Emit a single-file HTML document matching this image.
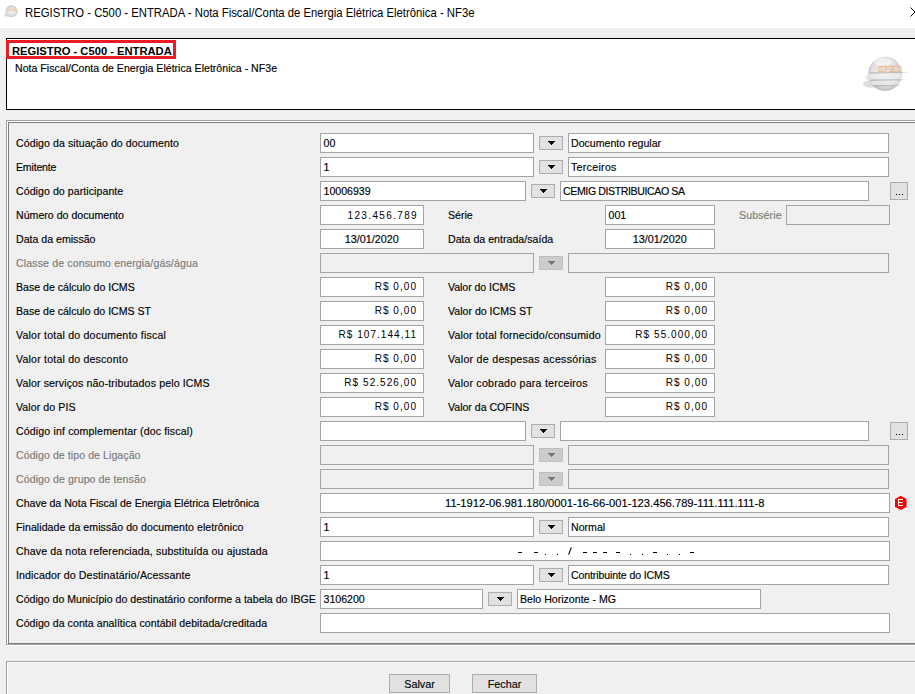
<!DOCTYPE html>
<html><head><meta charset="utf-8"><style>
*{box-sizing:border-box;margin:0;padding:0}
html,body{width:915px;height:694px;overflow:hidden;background:#f0f0f0;font-family:"Liberation Sans",sans-serif;color:#000;-webkit-text-stroke:0.15px currentColor}
.abs{position:absolute}
#title{position:absolute;left:0;top:0;width:915px;height:28px;background:#fff}
#title .t{position:absolute;left:25px;top:6px;font-size:12.3px;transform:scaleX(0.92);transform-origin:0 0;-webkit-text-stroke:0;line-height:14px;white-space:nowrap;color:#000}
#hdr{position:absolute;left:6px;top:38px;width:920px;height:72px;background:#fff;border:1px solid #000}
#red{position:absolute;left:6px;top:40px;width:170px;height:19px;border:3px solid #ed1c24}
#hb{position:absolute;left:12px;top:44px;-webkit-text-stroke:0;font-size:11.2px;font-weight:bold;line-height:14px;white-space:nowrap}
#hs{position:absolute;left:15px;top:62px;font-size:10.6px;line-height:12px;white-space:nowrap}
#grp{position:absolute;left:6px;top:120px;width:930px;height:525px;border:1px solid #a0a0a0;border-right:none}
#grpw{position:absolute;left:6px;top:645px;width:930px;height:1px;background:#fff}
#grp2{position:absolute;left:7px;top:121px;width:930px;height:523px;border-top:1px solid #fff;border-left:1px solid #fff}
#grp3{position:absolute;left:8px;top:122px;width:930px;height:522px;border-top:1px solid #7a808a;border-left:1px solid #7a808a;border-bottom:1px solid #7a808a}
#bot{position:absolute;left:6px;top:661px;width:930px;height:60px;border-top:1px solid #a0a0a0;border-left:1px solid #a0a0a0}
#bot2{position:absolute;left:7px;top:662px;width:930px;height:60px;border-top:1px solid #fff;border-left:1px solid #fff}
.lbl{position:absolute;font-size:10.6px;line-height:19px;height:19px;white-space:nowrap;padding-top:1px}
.dis{color:#7a7a7a}
.tb{position:absolute;height:20px;background:#fff;border:1px solid #a3a4aa;font-size:10.6px;line-height:17px;padding:1px 3px 0 2.5px;white-space:nowrap;overflow:hidden}
.dtb{background:#f0f0f0}
.desc{padding-left:2px}
.money{-webkit-text-stroke:0;font-size:10px;letter-spacing:1.05px;padding-right:6px;padding-top:0;line-height:17px}
.num{-webkit-text-stroke:0;font-size:10px;letter-spacing:1.35px;padding-right:5px}
.chave{font-size:11.2px}
.date{font-size:10.8px}
.dd{position:absolute;width:24px;height:14px;background:#e1e1e1;border:1px solid #adadad}
.dd svg{position:absolute;left:8px;top:4px;fill:#000}
.ddd{background:#cccccc;border-color:#bfbfbf}
.ddd svg{fill:#767676}
.ell{position:absolute;width:18px;height:18px;background:#e1e1e1;border:1px solid #adadad}
.ell b{position:absolute;top:11px;width:1px;height:1px;background:#000}
.ell b:nth-child(1){left:5px} .ell b:nth-child(2){left:8px} .ell b:nth-child(3){left:11px}
.eicon{position:absolute}
.btn{position:absolute;top:674px;height:19px;background:#e1e1e1;border:1px solid #adadad;font-size:10.75px;line-height:17px;padding-top:1px;text-align:center}
</style></head><body>
<div id="title">
<svg style="position:absolute;left:3px;top:5px" width="16" height="13" viewBox="0 0 16 13">
<defs><radialGradient id="ig" cx="0.5" cy="0.5" r="0.5"><stop offset="0" stop-color="#ececec"/><stop offset="0.8" stop-color="#dadada"/><stop offset="1" stop-color="#c4c4c4"/></radialGradient></defs>
<ellipse cx="4.5" cy="10" rx="3.5" ry="1.8" fill="#e0e0e0"/>
<circle cx="8.5" cy="6.3" r="6" fill="url(#ig)"/>
<rect x="5.8" y="3.6" width="8.2" height="2.2" fill="#f0cf9f"/>
<rect x="7.5" y="4" width="1.5" height="1.5" fill="#f4f4f4"/>
<rect x="4" y="7.4" width="9" height="1" fill="#f2f2f2"/>
</svg>
<div class="t">REGISTRO - C500 - ENTRADA - Nota Fiscal/Conta de Energia Elétrica Eletrônica - NF3e</div>
<svg style="position:absolute;left:910px;top:7px" width="10" height="10" viewBox="0 0 10 10"><path d="M0.5 0.5 L9.5 9.5 M0.5 9.5 L9.5 0.5" stroke="#000" stroke-width="1"/></svg>
</div>
<div id="hdr"></div>
<div id="red"></div>
<div id="hb">REGISTRO - C500 - ENTRADA</div>
<div id="hs">Nota Fiscal/Conta de Energia Elétrica Eletrônica - NF3e</div>
<svg style="position:absolute;left:858px;top:52px" width="57" height="42" viewBox="0 0 57 42">
<defs><radialGradient id="gl" cx="0.5" cy="0.45" r="0.55"><stop offset="0" stop-color="#f2f2f2"/><stop offset="0.7" stop-color="#e0e0e0"/><stop offset="0.92" stop-color="#c8c8c8"/><stop offset="1" stop-color="#b4b4b4"/></radialGradient>
<linearGradient id="wl" x1="0" x2="1"><stop offset="0" stop-color="#a8a8a8" stop-opacity="0.9"/><stop offset="0.75" stop-color="#b8b8b8" stop-opacity="0.8"/><stop offset="1" stop-color="#d0d0d0" stop-opacity="0"/></linearGradient><clipPath id="cp"><circle cx="27" cy="21.7" r="16.5"/></clipPath></defs>
<ellipse cx="13.5" cy="32" rx="8.5" ry="3.8" fill="#dedede"/>
<circle cx="27" cy="21.7" r="17" fill="url(#gl)"/>
<ellipse cx="25" cy="10" rx="9" ry="4.5" fill="#f8f8f8" opacity="0.6"/>
<g clip-path="url(#cp)"><rect x="8" y="21.5" width="40" height="5.5" fill="#f0f0f0" opacity="0.7"/><rect x="8" y="29" width="40" height="4" fill="#ebebeb" opacity="0.7"/></g>
<path d="M12 21 L52 20.4" stroke="url(#wl)" stroke-width="1"/>
<path d="M13 28.2 L49 27.6" stroke="url(#wl)" stroke-width="1"/>
<path d="M16 33.8 L45 33.2" stroke="url(#wl)" stroke-width="1"/>
<ellipse cx="11" cy="25.5" rx="3.5" ry="2.5" fill="#e2e2e2" opacity="0.8"/>
<text x="20.3" y="19.5" font-family="Liberation Serif" font-weight="bold" font-size="9.2" textLength="23.5" fill="#f2f2f2" stroke="#e8ad72" stroke-width="0.5" style="-webkit-text-stroke:0">SPED</text>
</svg>
<div id="grp"></div><div id="grpw"></div><div id="grp2"></div><div id="grp3"></div>
<div class="lbl" style="left:16px;top:133px;letter-spacing:0.067px">Código da situação do documento</div>
<div class="lbl" style="left:16px;top:157px;letter-spacing:-0.2px">Emitente</div>
<div class="lbl" style="left:16px;top:181px;letter-spacing:0.058px">Código do participante</div>
<div class="lbl" style="left:16px;top:205px;letter-spacing:0.011px">Número do documento</div>
<div class="lbl" style="left:16px;top:229px">Data da emissão</div>
<div class="lbl dis" style="left:16px;top:253px;letter-spacing:0.121px">Classe de consumo energia/gás/água</div>
<div class="lbl" style="left:16px;top:277px;letter-spacing:-0.009px">Base de cálculo do ICMS</div>
<div class="lbl" style="left:16px;top:301px;letter-spacing:-0.016px">Base de cálculo do ICMS ST</div>
<div class="lbl" style="left:16px;top:325px;letter-spacing:0.193px">Valor total do documento fiscal</div>
<div class="lbl" style="left:16px;top:349px;letter-spacing:0.191px">Valor total do desconto</div>
<div class="lbl" style="left:16px;top:373px;letter-spacing:0.126px">Valor serviços não-tributados pelo ICMS</div>
<div class="lbl" style="left:16px;top:397px;letter-spacing:0.073px">Valor do PIS</div>
<div class="lbl" style="left:16px;top:421px;letter-spacing:0.137px">Código inf complementar (doc fiscal)</div>
<div class="lbl dis" style="left:16px;top:445px;letter-spacing:0.058px">Código de tipo de Ligação</div>
<div class="lbl dis" style="left:16px;top:469px;letter-spacing:0.083px">Código de grupo de tensão</div>
<div class="lbl" style="left:16px;top:493px;letter-spacing:-0.012px">Chave da Nota Fiscal de Energia Elétrica Eletrônica</div>
<div class="lbl" style="left:16px;top:517px;letter-spacing:0.055px">Finalidade da emissão do documento eletrônico</div>
<div class="lbl" style="left:16px;top:541px;letter-spacing:0.12px">Chave da nota referenciada, substituída ou ajustada</div>
<div class="lbl" style="left:16px;top:565px;letter-spacing:0.123px">Indicador do Destinatário/Acessante</div>
<div class="lbl" style="left:16px;top:589px">Código do Município do destinatário conforme a tabela do IBGE</div>
<div class="lbl" style="left:16px;top:613px;letter-spacing:0.038px">Código da conta analítica contábil debitada/creditada</div>
<div class="tb" style="left:320px;top:133px;width:214px;text-align:left;">00</div>
<div class="dd" style="left:539px;top:136px"><svg width="7" height="4" shape-rendering="crispEdges"><path d="M0 0h7v1h-1v1h-1v1h-1v1h-1v-1h-1v-1h-1v-1h-1z"/></svg></div>
<div class="tb desc" style="left:568px;top:133px;width:321px;text-align:left;">Documento regular</div>
<div class="tb" style="left:320px;top:157px;width:214px;text-align:left;">1</div>
<div class="dd" style="left:539px;top:160px"><svg width="7" height="4" shape-rendering="crispEdges"><path d="M0 0h7v1h-1v1h-1v1h-1v1h-1v-1h-1v-1h-1v-1h-1z"/></svg></div>
<div class="tb desc" style="left:568px;top:157px;width:321px;text-align:left;letter-spacing:0.3px;">Terceiros</div>
<div class="tb" style="left:320px;top:181px;width:206px;text-align:left;">10006939</div>
<div class="dd" style="left:531px;top:184px"><svg width="7" height="4" shape-rendering="crispEdges"><path d="M0 0h7v1h-1v1h-1v1h-1v1h-1v-1h-1v-1h-1v-1h-1z"/></svg></div>
<div class="tb desc" style="left:560px;top:181px;width:309px;text-align:left;letter-spacing:-0.4px;">CEMIG DISTRIBUICAO SA</div>
<div class="ell" style="left:890px;top:182px"><b></b><b></b><b></b></div>
<div class="tb num" style="left:320px;top:205px;width:104px;text-align:right;">123.456.789</div>
<div class="lbl" style="left:448px;top:205px">Série</div>
<div class="tb" style="left:605px;top:205px;width:110px;text-align:left;">001</div>
<div class="lbl dis" style="left:739px;top:205px;letter-spacing:0.114px">Subsérie</div>
<div class="tb dtb" style="left:786px;top:205px;width:104px;text-align:left;"></div>
<div class="tb date" style="left:320px;top:229px;width:104px;text-align:center;">13/01/2020</div>
<div class="lbl" style="left:448px;top:229px;letter-spacing:0.02px">Data da entrada/saída</div>
<div class="tb date" style="left:605px;top:229px;width:110px;text-align:center;">13/01/2020</div>
<div class="tb dtb" style="left:320px;top:253px;width:214px;text-align:left;"></div>
<div class="dd ddd" style="left:539px;top:256px"><svg width="7" height="4" shape-rendering="crispEdges"><path d="M0 0h7v1h-1v1h-1v1h-1v1h-1v-1h-1v-1h-1v-1h-1z"/></svg></div>
<div class="tb dtb desc" style="left:568px;top:253px;width:321px;text-align:left;"></div>
<div class="tb money" style="left:320px;top:277px;width:104px;text-align:right;">R$ 0,00</div>
<div class="lbl" style="left:448px;top:277px;letter-spacing:-0.066px">Valor do ICMS</div>
<div class="tb money" style="left:605px;top:277px;width:110px;text-align:right;">R$ 0,00</div>
<div class="tb money" style="left:320px;top:301px;width:104px;text-align:right;">R$ 0,00</div>
<div class="lbl" style="left:448px;top:301px">Valor do ICMS ST</div>
<div class="tb money" style="left:605px;top:301px;width:110px;text-align:right;">R$ 0,00</div>
<div class="tb money" style="left:320px;top:325px;width:104px;text-align:right;">R$ 107.144,11</div>
<div class="lbl" style="left:448px;top:325px;letter-spacing:0.166px">Valor total fornecido/consumido</div>
<div class="tb money" style="left:605px;top:325px;width:110px;text-align:right;">R$ 55.000,00</div>
<div class="tb money" style="left:320px;top:349px;width:104px;text-align:right;">R$ 0,00</div>
<div class="lbl" style="left:448px;top:349px;letter-spacing:0.289px">Valor de despesas acessórias</div>
<div class="tb money" style="left:605px;top:349px;width:110px;text-align:right;">R$ 0,00</div>
<div class="tb money" style="left:320px;top:373px;width:104px;text-align:right;">R$ 52.526,00</div>
<div class="lbl" style="left:448px;top:373px;letter-spacing:0.245px">Valor cobrado para terceiros</div>
<div class="tb money" style="left:605px;top:373px;width:110px;text-align:right;">R$ 0,00</div>
<div class="tb money" style="left:320px;top:397px;width:104px;text-align:right;">R$ 0,00</div>
<div class="lbl" style="left:448px;top:397px;letter-spacing:-0.014px">Valor da COFINS</div>
<div class="tb money" style="left:605px;top:397px;width:110px;text-align:right;">R$ 0,00</div>
<div class="tb" style="left:320px;top:421px;width:206px;text-align:left;"></div>
<div class="dd" style="left:531px;top:424px"><svg width="7" height="4" shape-rendering="crispEdges"><path d="M0 0h7v1h-1v1h-1v1h-1v1h-1v-1h-1v-1h-1v-1h-1z"/></svg></div>
<div class="tb desc" style="left:560px;top:421px;width:309px;text-align:left;"></div>
<div class="ell" style="left:890px;top:422px"><b></b><b></b><b></b></div>
<div class="tb dtb" style="left:320px;top:445px;width:214px;text-align:left;"></div>
<div class="dd ddd" style="left:539px;top:448px"><svg width="7" height="4" shape-rendering="crispEdges"><path d="M0 0h7v1h-1v1h-1v1h-1v1h-1v-1h-1v-1h-1v-1h-1z"/></svg></div>
<div class="tb dtb desc" style="left:568px;top:445px;width:321px;text-align:left;"></div>
<div class="tb dtb" style="left:320px;top:469px;width:214px;text-align:left;"></div>
<div class="dd ddd" style="left:539px;top:472px"><svg width="7" height="4" shape-rendering="crispEdges"><path d="M0 0h7v1h-1v1h-1v1h-1v1h-1v-1h-1v-1h-1v-1h-1z"/></svg></div>
<div class="tb dtb desc" style="left:568px;top:469px;width:321px;text-align:left;"></div>
<div class="tb chave" style="left:320px;top:493px;width:570px;text-align:center;">11-1912-06.981.180/0001-16-66-001-123.456.789-111.111.111-8</div>
<div class="eicon" style="left:895px;top:495px"><svg width="12" height="16" viewBox="0 0 12 16"><path d="M5.75 0.8 L11.5 3.9 L11.5 11.9 L5.75 15 L0 11.9 L0 3.9 Z" fill="#f00"/><path d="M3 4 H8 V5.1 H4.1 V7 H7.6 V8.1 H4.1 V9.9 H8 V11 H3 Z" fill="#fff"/></svg></div>
<div class="tb" style="left:320px;top:517px;width:214px;text-align:left;">1</div>
<div class="dd" style="left:539px;top:520px"><svg width="7" height="4" shape-rendering="crispEdges"><path d="M0 0h7v1h-1v1h-1v1h-1v1h-1v-1h-1v-1h-1v-1h-1z"/></svg></div>
<div class="tb desc" style="left:568px;top:517px;width:321px;text-align:left;">Normal</div>
<div class="tb" style="left:320px;top:541px;width:570px;text-align:left;"></div>
<div class="abs" style="left:518px;top:552px;width:4px;height:1px;background:#000"></div>
<div class="abs" style="left:534px;top:552px;width:4px;height:1px;background:#000"></div>
<div class="abs" style="left:583px;top:552px;width:4px;height:1px;background:#000"></div>
<div class="abs" style="left:593px;top:552px;width:4px;height:1px;background:#000"></div>
<div class="abs" style="left:603px;top:552px;width:4px;height:1px;background:#000"></div>
<div class="abs" style="left:616px;top:552px;width:4px;height:1px;background:#000"></div>
<div class="abs" style="left:653px;top:552px;width:4px;height:1px;background:#000"></div>
<div class="abs" style="left:690px;top:552px;width:4px;height:1px;background:#000"></div>
<div class="abs" style="left:545px;top:554px;width:1px;height:1px;background:#000"></div>
<div class="abs" style="left:557px;top:554px;width:1px;height:1px;background:#000"></div>
<div class="abs" style="left:630px;top:554px;width:1px;height:1px;background:#000"></div>
<div class="abs" style="left:642px;top:554px;width:1px;height:1px;background:#000"></div>
<div class="abs" style="left:667px;top:554px;width:1px;height:1px;background:#000"></div>
<div class="abs" style="left:679px;top:554px;width:1px;height:1px;background:#000"></div>
<svg class="abs" style="left:566px;top:546px" width="8" height="10"><path d="M2.6 8.6 L5.4 1.4" stroke="#000" stroke-width="1.1"/></svg>
<div class="tb" style="left:320px;top:565px;width:214px;text-align:left;">1</div>
<div class="dd" style="left:539px;top:568px"><svg width="7" height="4" shape-rendering="crispEdges"><path d="M0 0h7v1h-1v1h-1v1h-1v1h-1v-1h-1v-1h-1v-1h-1z"/></svg></div>
<div class="tb desc" style="left:568px;top:565px;width:321px;text-align:left;letter-spacing:-0.13px;">Contribuinte do ICMS</div>
<div class="tb" style="left:320px;top:589px;width:163px;text-align:left;">3106200</div>
<div class="dd" style="left:488px;top:592px"><svg width="7" height="4" shape-rendering="crispEdges"><path d="M0 0h7v1h-1v1h-1v1h-1v1h-1v-1h-1v-1h-1v-1h-1z"/></svg></div>
<div class="tb desc" style="left:517px;top:589px;width:244px;text-align:left;">Belo Horizonte - MG</div>
<div class="tb" style="left:320px;top:613px;width:570px;text-align:left;"></div>
<div id="bot"></div><div id="bot2"></div>
<div class="btn" style="left:389px;width:61px">Salvar</div>
<div class="btn" style="left:472px;width:65px">Fechar</div>
</body></html>
